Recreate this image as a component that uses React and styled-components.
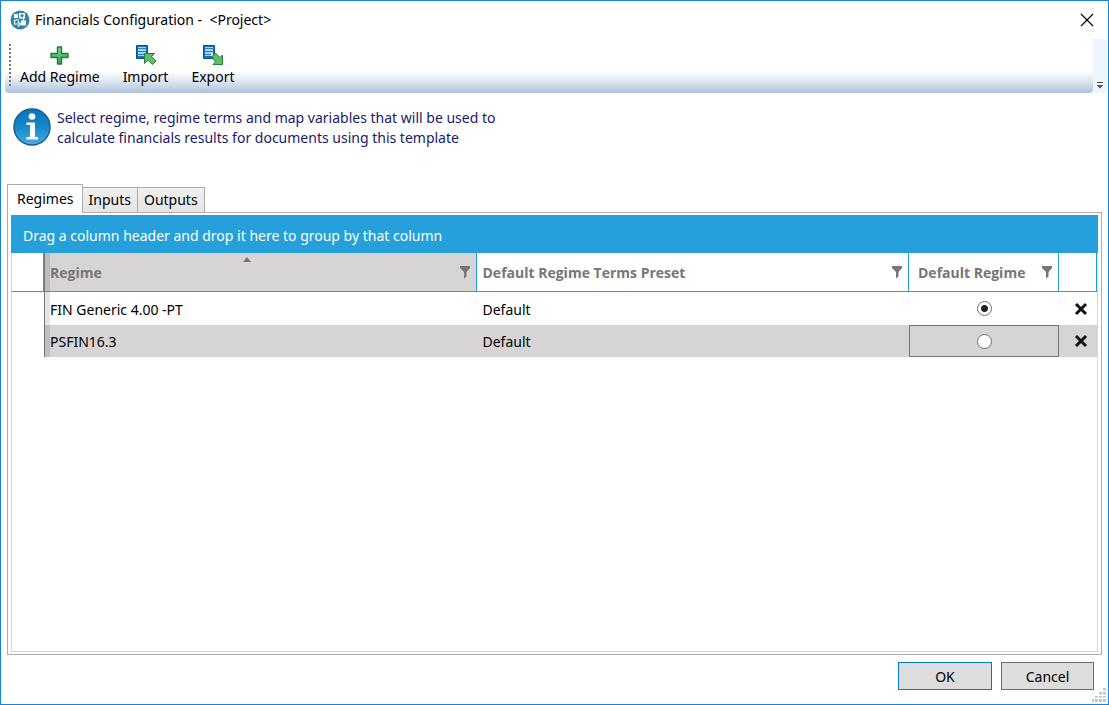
import React, { useState } from 'react'
import styled, { createGlobalStyle } from 'styled-components'

const initialRegimes = [
    { id: 1, name: 'FIN Generic 4.00 -PT', preset: 'Default' },
    { id: 2, name: 'PSFIN16.3', preset: 'Default' },
]

const tabs = ['Regimes', 'Inputs', 'Outputs']

function AppIcon() {
    return (
        <svg width="20" height="20" viewBox="0 0 20 20" fill="none" aria-hidden="true">
            <circle cx="10" cy="10" r="9.500" fill="#2f86a8" />
            <path d="M4 4h4v4H4zM9 3h6v5.500H9zM11 10.500h5v5h-5z" fill="#fff" />
            <path d="M12 3.800L14 5.800l-2 2-2-2z" fill="#2f86a8" />
            <path d="M4.500 10v4H9M8 11.500l2.500 2.500L8 16.500M13.500 8v3M4.500 10H9" stroke="#fff" strokeWidth="1.200" />
        </svg>
    )
}

function PlusIcon() {
    return (
        <svg width="20" height="22" viewBox="0 0 20 22" aria-hidden="true">
            <defs>
                <linearGradient id="plus" x1="0" y1="0" x2="0" y2="1">
                    <stop offset="0" stopColor="#7fd48b" />
                    <stop offset="1" stopColor="#32a852" />
                </linearGradient>
            </defs>
            <path
                d="M7.500 3h4v6.500h6.500v4h-6.500V20h-4v-6.500H1v-4h6.500z"
                fill="url(#plus)"
                stroke="#22793c"
                strokeWidth="1.400"
                strokeLinejoin="round"
            />
        </svg>
    )
}

function DocumentIcon({ out }) {
    return (
        <svg width="22" height="22" viewBox="0 0 22 22" aria-hidden="true">
            <path d="M1.500 1.500h11v13h-11z" fill="#1872b4" stroke="#0c4f86" />
            <path d="M3 3h8v9H3z" fill="#d7ecfa" />
            <path d="M3 4.500h8M3 7.500h8M3 10.500h6" stroke="#2380c2" strokeWidth="1.400" />
            <path
                d={out
                    ? 'M10 12.500l3.500-3.500 4.500 4.500 2.500-2.500v9.500H11l2.500-2.500z'
                    : 'M9.500 9.500h10l-3 3 4.500 4.500-3.500 3.500-4.500-4.500-3.500 3.500z'}
                fill="#5bbf6b"
                stroke="#257c3b"
                strokeLinejoin="round"
            />
        </svg>
    )
}

function InfoIcon() {
    return (
        <svg width="38" height="38" viewBox="0 0 38 38" aria-hidden="true">
            <defs>
                <linearGradient id="info" x1="0" y1="0" x2="0" y2="1">
                    <stop offset="0" stopColor="#0874b8" />
                    <stop offset="0.5" stopColor="#1687cb" />
                    <stop offset="1" stopColor="#4aabe0" />
                </linearGradient>
            </defs>
            <circle cx="19" cy="19" r="18" fill="url(#info)" stroke="#17608f" strokeWidth="1.500" />
            <circle cx="19" cy="8.500" r="3.300" fill="#fff" />
            <path d="M13.500 14.500H22V29h3v2.500H13.500V29h3.500V17h-3.500z" fill="#fff" />
        </svg>
    )
}

function FilterIcon() {
    return (
        <svg width="12" height="14" viewBox="0 0 12 14" aria-hidden="true">
            <path d="M1 0h10v2L7.500 6v4.500L5 12.500V6L1 2z" fill="#767676" />
        </svg>
    )
}

function App() {
    const [activeTab, setActiveTab] = useState('Regimes')
    const [regimes, setRegimes] = useState(initialRegimes)
    const [defaultId, setDefaultId] = useState(1)
    const [selectedId, setSelectedId] = useState(2)

    const removeRegime = id => {
        setRegimes(regimes.filter(regime => regime.id !== id))
    }

    return (
        <>
            <GlobalStyle />
            <Window>
                <TitleBar>
                    <AppIcon />
                    <Title>Financials Configuration - &nbsp;&lt;Project&gt;</Title>
                    <CloseButton type="button" aria-label="Close">
                        <svg width="14" height="14" viewBox="0 0 14 14" aria-hidden="true">
                            <path d="M1 1l12 12M13 1L1 13" stroke="#000" strokeWidth="1.200" />
                        </svg>
                    </CloseButton>
                </TitleBar>

                <ToolbarTray>
                    <Toolbar>
                        <Grip />
                        <ToolButton type="button"><PlusIcon />Add Regime</ToolButton>
                        <ToolButton type="button"><DocumentIcon />Import</ToolButton>
                        <ToolButton type="button"><DocumentIcon out />Export</ToolButton>
                    </Toolbar>
                    <Overflow type="button" aria-label="Toolbar options">
                        <svg width="8" height="8" viewBox="0 0 8 8" aria-hidden="true">
                            <path d="M1 1.500h6" stroke="#444" />
                            <path d="M0.500 4h7L4 7.500z" fill="#555" />
                        </svg>
                    </Overflow>
                </ToolbarTray>

                <Info>
                    <InfoIcon />
                    <InfoText>
                        Select regime, regime terms and map variables that will be used to
                        calculate financials results for documents using this template
                    </InfoText>
                </Info>

                <TabList role="tablist">
                    {tabs.map(tab => (
                        <Tab
                            key={tab}
                            type="button"
                            role="tab"
                            aria-selected={tab === activeTab}
                            $active={tab === activeTab}
                            onClick={() => setActiveTab(tab)}
                        >
                            {tab}
                        </Tab>
                    ))}
                </TabList>

                <TabPanel role="tabpanel">
                    <GroupPanel>Drag a column header and drop it here to group by that column</GroupPanel>
                    <GridFrame>
                        <Table>
                            <colgroup>
                                <IndicatorCol />
                                <col />
                                <col />
                                <DefaultCol />
                                <DeleteCol />
                            </colgroup>
                            <thead>
                                <tr>
                                    <Th />
                                    <Th $sorted>
                                        <SortMark>
                                            <svg width="8" height="5" viewBox="0 0 8 5" aria-hidden="true">
                                                <path d="M0 5L4 0l4 5z" fill="#767676" />
                                            </svg>
                                        </SortMark>
                                        <HeaderContent>Regime<FilterIcon /></HeaderContent>
                                    </Th>
                                    <Th><HeaderContent>Default Regime Terms Preset<FilterIcon /></HeaderContent></Th>
                                    <Th><HeaderContent $wide>Default Regime<FilterIcon /></HeaderContent></Th>
                                    <Th />
                                </tr>
                            </thead>
                            <tbody>
                                {regimes.map(regime => (
                                    <Row
                                        key={regime.id}
                                        $selected={regime.id === selectedId}
                                        onClick={() => setSelectedId(regime.id)}
                                    >
                                        <IndicatorCell />
                                        <FrozenCell>{regime.name}</FrozenCell>
                                        <Td>{regime.preset}</Td>
                                        <CenterCell $current={regime.id === selectedId}>
                                            <Radio
                                                type="radio"
                                                name="defaultRegime"
                                                aria-label={regime.name}
                                                checked={regime.id === defaultId}
                                                onChange={() => setDefaultId(regime.id)}
                                            />
                                        </CenterCell>
                                        <CenterCell>
                                            <DeleteButton
                                                type="button"
                                                aria-label={`Delete ${regime.name}`}
                                                onClick={() => removeRegime(regime.id)}
                                            >
                                                <svg width="14" height="14" viewBox="0 0 14 14" aria-hidden="true">
                                                    <path d="M2 2l10 10M12 2L2 12" stroke="#14140c" strokeWidth="3" />
                                                </svg>
                                            </DeleteButton>
                                        </CenterCell>
                                    </Row>
                                ))}
                            </tbody>
                        </Table>
                    </GridFrame>
                </TabPanel>

                <Footer>
                    <DialogButton type="button" $primary>OK</DialogButton>
                    <DialogButton type="button">Cancel</DialogButton>
                </Footer>
                <ResizeGrip>
                    <svg width="14" height="14" viewBox="0 0 14 14" fill="#bcc5d3" aria-hidden="true">
                        <path d="M11 0h3v3h-3zM7 4h3v3H7zM11 4h3v3h-3zM3 8h3v2H3zM7 8h3v2H7zM11 8h3v2h-3zM0 11h2v3H0zM3 11h3v3H3zM7 11h3v3H7zM11 11h3v3h-3z" />
                        <path d="M0 3h14M0 7h14M0 10h14M2.500 0v14M6.500 0v14M10.500 0v14" stroke="#fff" />
                    </svg>
                </ResizeGrip>
            </Window>
        </>
    )
}

const GlobalStyle = createGlobalStyle`
    * {
        box-sizing: border-box;
    }
    body {
        margin: 0;
        background: #fff;
    }
    body, button {
        font-family: "Segoe UI", "Noto Sans", "Open Sans", sans-serif;
        font-size: 14px;
        line-height: 20px;
        color: #000;
    }
    svg {
        display: block;
        flex: none;
    }
`

const Window = styled.div`
    position: relative;
    display: flex;
    flex-direction: column;
    min-height: 100vh;
    border: 1px solid #1883d7;
    background: #fff;
`

const TitleBar = styled.header`
    display: flex;
    align-items: center;
    height: 38px;
    padding: 0 8px 0 9px;
`

const Title = styled.h1`
    flex: 1;
    margin: 0 0 0 5px;
    font-size: 14px;
    font-weight: 400;
`

const CloseButton = styled.button`
    padding: 6px;
    border: 0;
    background: none;
`

const ToolbarTray = styled.div`
    display: flex;
    height: 54px;
    margin: 0 1px 0 4px;
    border-radius: 4px;
    background: #eef5fd;
`

const Toolbar = styled.div`
    display: flex;
    flex: 1;
    align-items: flex-start;
    padding: 5px 4px;
    border-radius: 0 4px 4px 4px;
    background: linear-gradient(#fff 0%, #fff 60%, #dfe7f2 78%, #adc2df 100%);
`

const Grip = styled.span`
    width: 2px;
    height: 42px;
    margin-right: 2px;
    background: repeating-linear-gradient(#777 0 2px, transparent 2px 4px);
`

const ToolButton = styled.button`
    display: flex;
    flex-direction: column;
    align-items: center;
    justify-content: space-between;
    height: 43px;
    margin-right: 9px;
    padding: 0 7px;
    border: 0;
    background: none;
`

const Overflow = styled.button`
    display: flex;
    align-items: flex-end;
    justify-content: center;
    width: 14px;
    padding: 0 0 4px;
    border: 0;
    background: none;
`

const Info = styled.section`
    display: flex;
    align-items: flex-start;
    gap: 6px;
    height: 91px;
    padding: 15px 12px 0;
`

const InfoText = styled.p`
    width: 460px;
    margin: 0;
    color: #191970;
`

const TabList = styled.div`
    display: flex;
    align-items: flex-end;
    margin: 0 6px;
`

const Tab = styled.button`
    height: ${props => (props.$active ? '29px' : '25px')};
    margin-bottom: ${props => (props.$active ? '-1px' : '0')};
    margin-left: ${props => (props.$active ? '0' : '-1px')};
    padding: ${props => (props.$active ? '0 8px 0 9px' : '0 6px')};
    border: 1px solid #acacac;
    border-bottom: 0;
    background: ${props => (props.$active ? '#fff' : 'linear-gradient(#f0f0f0, #e5e5e5)')};
    z-index: ${props => (props.$active ? 1 : 0)};
`

const TabPanel = styled.main`
    display: flex;
    flex: 1;
    flex-direction: column;
    margin: 0 6px;
    padding: 2px 3px;
    border: 1px solid #acacac;
`

const GroupPanel = styled.div`
    padding: 11px 12px 7px;
    background: #25a0da;
    color: #fff;
`

const GridFrame = styled.div`
    flex: 1;
    border: 1px solid #d6d4d4;
    border-top: 0;
`

const Table = styled.table`
    width: 100%;
    table-layout: fixed;
    border-spacing: 0;
`

const IndicatorCol = styled.col`
    width: 32px;
`

const DefaultCol = styled.col`
    width: 150px;
`

const DeleteCol = styled.col`
    width: 38px;
`

const Th = styled.th`
    position: relative;
    height: 39px;
    padding: 2px 0 0;
    border-right: 1px solid #25a0da;
    border-bottom: 1px solid #25a0da;
    background: ${props => (props.$sorted ? '#d6d4d4' : '#fff')};
    box-shadow: ${props => (props.$sorted ? 'inset 1px 0 #767676, inset 6px 0 #bebcbc' : 'none')};
    color: #767676;
    font-family: "Segoe UI", "Open Sans", "Noto Sans", sans-serif;
    font-weight: 700;
    text-align: left;
`

const HeaderContent = styled.div`
    display: flex;
    align-items: center;
    justify-content: space-between;
    padding: ${props => (props.$wide ? '0 5px 0 9px' : '0 5px 0 6px')};
    white-space: nowrap;
`

const SortMark = styled.span`
    position: absolute;
    top: 4px;
    left: 0;
    right: 26px;
    display: flex;
    justify-content: center;
`

const Td = styled.td`
    height: 32px;
    padding: 2px 6px 0;
`

const IndicatorCell = styled(Td)`
    background: #fff;
`

const FrozenCell = styled(Td)`
    box-shadow: inset 1px 0 #767676, inset 6px 0 rgba(0, 0, 0, 0.1);
`

const CenterCell = styled(Td)`
    padding: 0;
    border: ${props => (props.$current ? '1px solid #767676' : '0')};
    text-align: center;
`

const Row = styled.tr`
    background: ${props => (props.$selected ? '#d6d4d4' : '#fff')};

    &:first-child td {
        height: 33px;
    }
`

const Radio = styled.input`
    display: block;
    width: 15px;
    height: 15px;
    margin: 0 auto;
    appearance: none;
    border: 1px solid #707070;
    border-radius: 50%;
    background: #fff;

    &:checked {
        background: radial-gradient(circle, #212121 0 3px, #fff 4px);
    }
`

const DeleteButton = styled.button`
    display: block;
    margin: 0 auto;
    padding: 0 3px 0 8px;
    border: 0;
    background: none;
`

const Footer = styled.footer`
    display: flex;
    justify-content: flex-end;
    gap: 9px;
    padding: 7px 14px 14px;
`

const DialogButton = styled.button`
    width: ${props => (props.$primary ? '94px' : '93px')};
    height: 28px;
    padding: 2px 0 0;
    border: 1px solid ${props => (props.$primary ? '#0078d7' : '#707070')};
    background: #ddd;
`

const ResizeGrip = styled.span`
    position: absolute;
    right: 2px;
    bottom: 2px;
`

export default App
